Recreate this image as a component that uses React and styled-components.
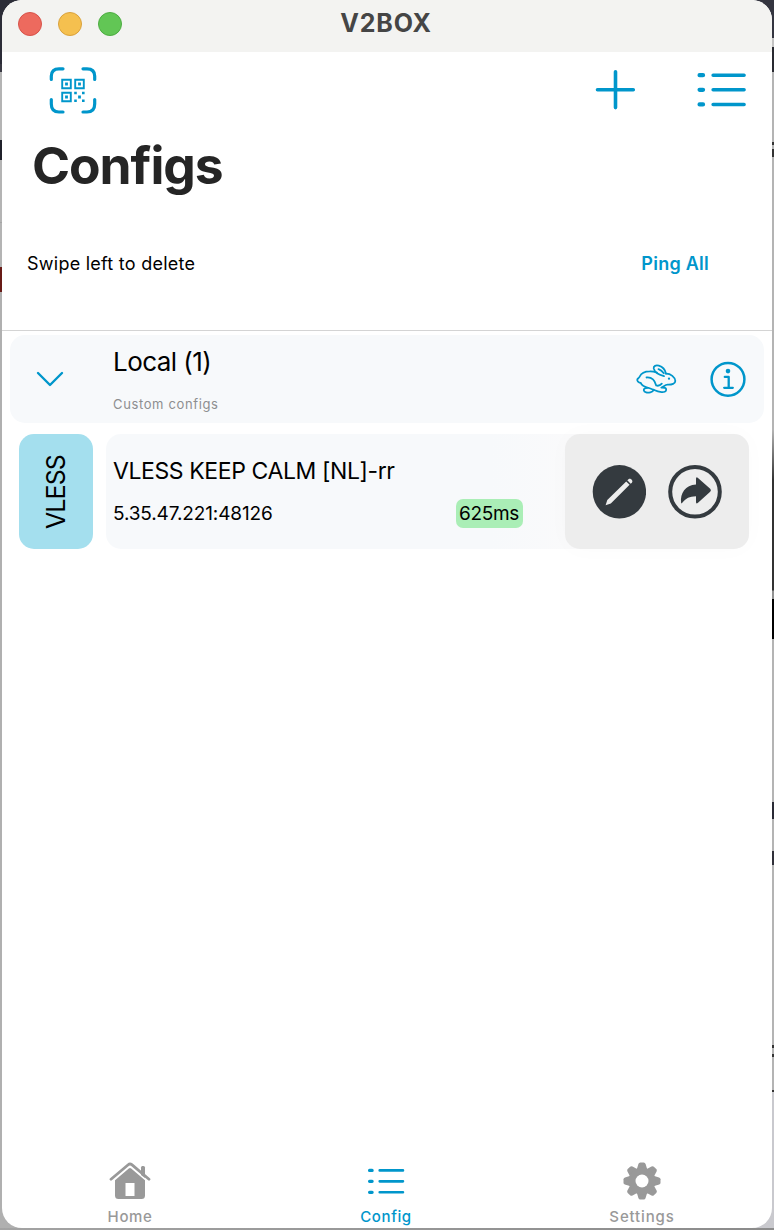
import React from 'react';
import styled, { createGlobalStyle } from 'styled-components';

const blue = '#0096cb';
const grey = '#999999';
const dark = '#343a3f';

const GlobalStyle = createGlobalStyle`
  * { box-sizing: border-box; }
  body { margin: 0; background: #b4b4b4; overflow: hidden; }
  svg { display: block; flex: none; }
`;

const Desktop = styled.div`
  width: 774px;
  height: 1230px;
  padding: 0 2px 2px;
  font-family: Inter, 'Liberation Sans', sans-serif;
  color: #000;
  background:
    linear-gradient(90deg, #a3a3a3, #8b8b8b) bottom / 100% 2px no-repeat,
    linear-gradient(180deg, #2b2c37 0 64px, #393943 64px 72px, #b4b4b4 72px 140px,
      #20212b 140px 160px, #b4b4b4 160px 222px, #a5a5a5 222px 223px, #b4b4b4 223px 267px,
      #681b17 267px 292px, #b0b0b0 292px) left / 20px 100% no-repeat,
    linear-gradient(180deg, #343540 0 38px, #c3c3c3 38px 47px, #292a31 47px 72px,
      #b4b4b4 72px 142px, #333 142px 145px, #b4b4b4 145px 149px, #333 149px 157px,
      #b4b4b4 157px 430px, #333 480px 590px, #929292 591px 599px, #000 599px 639px,
      #b4b4b4 639px 802px, #292a35 802px 819px, #b4b4b4 819px 851px, #303039 851px 865px,
      #b4b4b4 865px 1045px, #333 1045px 1048px, #b4b4b4 1048px 1054px, #333 1054px 1057px,
      #b4b4b4 1057px 1090px, #333 1090px 1092px, #c9c9ce 1092px) right / 20px 100% no-repeat;
`;

const Window = styled.div`
  display: flex;
  flex-direction: column;
  height: 1228px;
  background: #fff;
  border-radius: 20px;
  overflow: hidden;
`;

const Text = styled.span`
  display: block;
  white-space: nowrap;
  font-size: ${p => p.$size}px;
  line-height: ${p => p.$line}px;
  font-weight: ${p => p.$weight || 400};
  letter-spacing: ${p => p.$track || 0}px;
  color: ${p => p.$color || '#000'};
`;

const TitleBar = styled.header`
  flex: none;
  display: grid;
  grid-template-columns: 1fr auto 1fr;
  height: 52px;
  padding: 0 18px 0 16px;
  background: #f3f3f1;
`;

const Title = styled(Text)`
  margin: 0;
`;

const Lights = styled.div`
  display: flex;
  gap: 16px;
  padding-top: 12px;
`;

const Light = styled.i`
  width: 24px;
  height: 24px;
  border-radius: 50%;
  background: ${p => p.$fill};
  border: 1px solid ${p => p.$edge};
`;

const Toolbar = styled.nav`
  flex: none;
  display: flex;
  align-items: center;
  height: 76px;
  padding: 0 25px 0 47px;
`;

const Actions = styled.div`
  display: flex;
  align-items: center;
  gap: 60px;
  margin-left: auto;
`;

const Heading = styled.h1`
  flex: none;
  margin: 0;
  height: 76px;
  padding-left: 30px;
  font-size: 51.5px;
  line-height: 74px;
  font-weight: 700;
  letter-spacing: -1.05px;
  color: #252525;
`;

const HintRow = styled.div`
  flex: none;
  display: flex;
  justify-content: space-between;
  height: 127px;
  padding: 48px 63px 0 25px;
  border-bottom: 1px solid #d4d4d4;
`;

const Group = styled.section`
  flex: none;
  display: flex;
  align-items: center;
  height: 88px;
  margin: 4px 8px 0;
  padding: 0 18px 0 26px;
  border-radius: 15px;
  background: #f7f9fb;
`;

const GroupText = styled.div`
  display: flex;
  flex-direction: column;
  gap: 15px;
  align-self: stretch;
  margin-left: 49px;
  padding-top: 10px;
`;

const GroupIcons = styled.div`
  display: flex;
  align-items: center;
  gap: 33px;
  margin-left: auto;
`;

const ConfigRow = styled.section`
  flex: none;
  display: flex;
  gap: 13px;
  height: 115px;
  margin: 11px 23px 0 17px;
`;

const Protocol = styled.div`
  display: flex;
  align-items: center;
  justify-content: center;
  width: 74px;
  border-radius: 15px;
  background: #a4dfee;
`;

const Vertical = styled(Text)`
  writing-mode: vertical-rl;
  transform: rotate(180deg);
`;

const ConfigCard = styled.div`
  flex: 1;
  display: flex;
  border-radius: 15px;
  background: linear-gradient(90deg, #f7f9fb 60%, #fafafb 72%);
`;

const ConfigInfo = styled.div`
  flex: 1;
  padding: 22px 42px 0 7px;
`;

const Address = styled.div`
  display: flex;
  justify-content: space-between;
  align-items: center;
  height: 29px;
  margin-top: 13px;
`;

const Ping = styled.div`
  width: 67px;
  height: 29px;
  padding-left: 3px;
  border-radius: 7px;
  background: #aaeeb6;
`;

const CardActions = styled.div`
  display: flex;
  align-items: center;
  justify-content: center;
  gap: 22px;
  width: 184px;
  border-radius: 15px;
  background: #ededed;
  box-shadow: 0 0 24px rgba(0, 0, 0, 0.018);
`;

const TabBar = styled.footer`
  flex: none;
  display: flex;
  height: 72px;
  margin-top: auto;
`;

const Tab = styled.div`
  display: flex;
  flex-direction: column;
  align-items: center;
  gap: 4px;
  width: 256px;
  padding-top: 4px;
`;

const TabIcon = styled.div`
  flex: none;
  display: grid;
  place-items: center;
  height: 42px;
`;

function QrScan() {
  return (
    <svg width="48" height="48" viewBox="0 0 48 48" fill="none" stroke={blue}>
      <path d="M2.3 13.5V10Q2.3 2.8 10 2.8H14M34 2.8H38Q45.7 2.8 45.7 10V13.5M2.3 33.5V38Q2.3 46 10 46H14M34 46H38Q45.7 46 45.7 38V33.5" strokeWidth="3.2" strokeLinecap="round" />
      <path d="M13.2 13.7H21.8V22.3H13.2ZM26.2 13.7H34.8V22.3H26.2ZM13.2 26.7H21.8V35.3H13.2Z" strokeWidth="1.9" />
      <path fill={blue} stroke="none" d="M16.1 16.6h2.8v2.8h-2.8zM29.1 16.6h2.8v2.8h-2.8zM16.1 29.6h2.8v2.8h-2.8zM25.2 25.7h2.6v2.6h-2.6zM33 25.7h2.6v2.6h-2.6zM29.1 29.6h2.8v2.8h-2.8zM25.2 33.5h2.6v2.6h-2.6zM33 33.5h2.6v2.6h-2.6z" />
    </svg>
  );
}

function Plus() {
  return (
    <svg width="42" height="40" viewBox="0 0 42 40" stroke={blue} strokeWidth="3.6" strokeLinecap="round">
      <path d="M21.5 1.8V37.6M3.5 19.7H39.3" />
    </svg>
  );
}

function List({ width, height }) {
  return (
    <svg width={width} height={height} viewBox="0 0 50 36" stroke={blue} strokeLinecap="round">
      <path d="M3.1 3.2H6.5M3.1 17.8H6.5M3.1 32.4H6.5" strokeWidth="4.3" />
      <path d="M16.6 3.2H47.6M16.6 17.8H47.6M16.6 32.4H47.6" strokeWidth="3.5" />
    </svg>
  );
}

function Chevron() {
  return (
    <svg width="28" height="18" viewBox="0 0 28 18" fill="none" stroke={blue} strokeWidth="2.4" strokeLinecap="round" strokeLinejoin="round">
      <path d="M2 3L14 15L26 3" />
    </svg>
  );
}

function Hare() {
  return (
    <svg width="41" height="30" viewBox="0 0 41 30" fill="none" stroke={blue} strokeWidth="1.8" strokeLinecap="round" strokeLinejoin="round">
      <path d="M30 9.6C29.2 6 26.4 2.8 22.8 1.7C19.8 .9 17.3 2 17.7 4.4C18.4 7.4 22.5 10.8 28 12.2M27.8 9.3C26.2 7.1 24.5 5.9 22.5 5.1" />
      <path d="M30 9.6C34.6 9.4 39.2 13.4 39.3 16.9C39.3 19.7 36 20.9 31.5 20.7C29 20.7 27.6 22.8 25.3 23.5C28.6 23.4 30.3 24 30.2 25.8C30.1 27.7 28 28.3 25.5 28.1C20.5 27.7 17.5 25.4 13 24C8.5 22.8 5.5 21.2 4.8 19C2.3 18.6 1 17.1 1.3 15.5C1.7 14.2 3.1 14.2 3.7 12.5C5.3 8.9 9.3 7.3 13.7 7.3C17 7.2 19 7.9 21 8.6" />
      <path d="M10.5 13.5C15.5 13 18.7 15.9 20.2 21.5C22.7 22.2 24.5 21.2 25.8 19.7M12 23.8C8.8 23.6 7.5 24.8 7.8 26.4C8.2 28.6 11.4 29 14.3 28.3C16.4 27.8 17.4 26.7 17.7 25.7" />
      <circle cx="33" cy="14.7" r="1.15" fill={blue} stroke="none" />
    </svg>
  );
}

function Info() {
  return (
    <svg width="36" height="36" viewBox="0 0 36 36" fill="none" stroke={blue}>
      <circle cx="18" cy="18.3" r="16.4" strokeWidth="2.5" />
      <circle cx="18" cy="10.1" r="2.3" fill={blue} stroke="none" />
      <path d="M14.8 15.9H18.7V26.6M14.2 26.8H22.8" strokeWidth="2.3" strokeLinecap="round" strokeLinejoin="round" />
    </svg>
  );
}

function Edit() {
  return (
    <svg width="54" height="54" viewBox="0 0 54 54">
      <circle cx="27.4" cy="26.8" r="26.7" fill={dark} />
      <path fill="#ededed" d="M13.6 40.3L15.3 35.1L34.2 16.4L37.6 19.8L18.8 38.5ZM35.3 15.3L36.5 14.2C38.5 12.6 41.7 15.8 39.9 17.7L38.7 18.8Z" />
    </svg>
  );
}

function Share() {
  return (
    <svg width="54" height="54" viewBox="0 0 54 54">
      <circle cx="27" cy="26.8" r="24.8" fill="none" stroke={dark} strokeWidth="4" />
      <path fill={dark} d="M13.1 37.8C12 27.9 17.4 20.2 28 19.4V14Q28 11.3 30 13L42.2 23.8Q43.7 25.3 42.2 26.8L30 37.7Q28 39.4 28 36.9V31.2C21.2 31.4 18.2 33.1 14.5 37.6Q13.4 39.1 13.1 37.8Z" />
    </svg>
  );
}

function Home() {
  return (
    <svg width="42" height="38" viewBox="0 0 42 38" fill={grey}>
      <path d="M32 13V5.5Q32 4 33.4 4H34.5Q36 4 36 5.5V16Z" />
      <path d="M2 17.2L19.2 2.7Q21 1.2 22.8 2.7L40 17.2" fill="none" stroke={grey} strokeWidth="2.8" strokeLinecap="round" />
      <path fillRule="evenodd" d="M6 18.2L19.8 6.6Q21 5.6 22.2 6.6L36 18.2V33.5Q36 37 32.5 37H9.5Q6 37 6 33.5ZM16.5 21V34H25.5V21Z" />
    </svg>
  );
}

function Gear() {
  return (
    <svg width="38" height="38" viewBox="0 0 38 38">
      <g fill={grey}>
        {[0, 45, 90, 135, 180, 225, 270, 315].map(angle => (
          <path key={angle} transform={`rotate(${angle} 19 19)`} d="M13.3 9L15.4 2Q15.9 .5 17.3 .5H20.7Q22.1 .5 22.6 2L24.7 9Z" />
        ))}
        <circle cx="19" cy="19" r="13.3" />
      </g>
      <circle cx="19" cy="19" r="6.5" fill="#fff" />
    </svg>
  );
}

export default function App() {
  return (
    <Desktop>
      <GlobalStyle />
      <Window>
        <TitleBar>
          <Lights>
            <Light $fill="#ed6a5e" $edge="#d7524a" />
            <Light $fill="#f5c04f" $edge="#d9a13c" />
            <Light $fill="#62c655" $edge="#4dac42" />
          </Lights>
          <Title as="h2" $size={25} $line={46} $weight={700} $color="#454545" $track={0.8}>V2BOX</Title>
        </TitleBar>
        <Toolbar>
          <QrScan />
          <Actions>
            <Plus />
            <List width={51} height={36} />
          </Actions>
        </Toolbar>
        <Heading>Configs</Heading>
        <HintRow>
          <Text $size={18} $line={24} $track={0.25}>Swipe left to delete</Text>
          <Text $size={18} $line={24} $weight={600} $color={blue} $track={0.25}>Ping All</Text>
        </HintRow>
        <Group>
          <Chevron />
          <GroupText>
            <Text $size={26} $line={34} $track={-0.55}>Local (1)</Text>
            <Text $size={13} $line={20} $track={0.63} $color="#8d8e90">Custom configs</Text>
          </GroupText>
          <GroupIcons>
            <Hare />
            <Info />
          </GroupIcons>
        </Group>
        <ConfigRow>
          <Protocol>
            <Vertical $size={25} $line={30} $track={-0.9}>VLESS</Vertical>
          </Protocol>
          <ConfigCard>
            <ConfigInfo>
              <Text $size={23} $line={30} $track={-0.4}>VLESS KEEP CALM [NL]-rr</Text>
              <Address>
                <Text $size={19} $line={29} $track={-0.13}>5.35.47.221:48126</Text>
                <Ping><Text $size={19} $line={29} $track={-0.3}>625ms</Text></Ping>
              </Address>
            </ConfigInfo>
            <CardActions>
              <Edit />
              <Share />
            </CardActions>
          </ConfigCard>
        </ConfigRow>
        <TabBar>
          <Tab>
            <TabIcon><Home /></TabIcon>
            <Text $size={15} $line={22} $weight={500} $track={0.6} $color={grey}>Home</Text>
          </Tab>
          <Tab>
            <TabIcon><List width={38} height={27} /></TabIcon>
            <Text $size={15} $line={22} $weight={500} $track={0.6} $color={blue}>Config</Text>
          </Tab>
          <Tab>
            <TabIcon><Gear /></TabIcon>
            <Text $size={15} $line={22} $weight={500} $track={0.85} $color={grey}>Settings</Text>
          </Tab>
        </TabBar>
      </Window>
    </Desktop>
  );
}
